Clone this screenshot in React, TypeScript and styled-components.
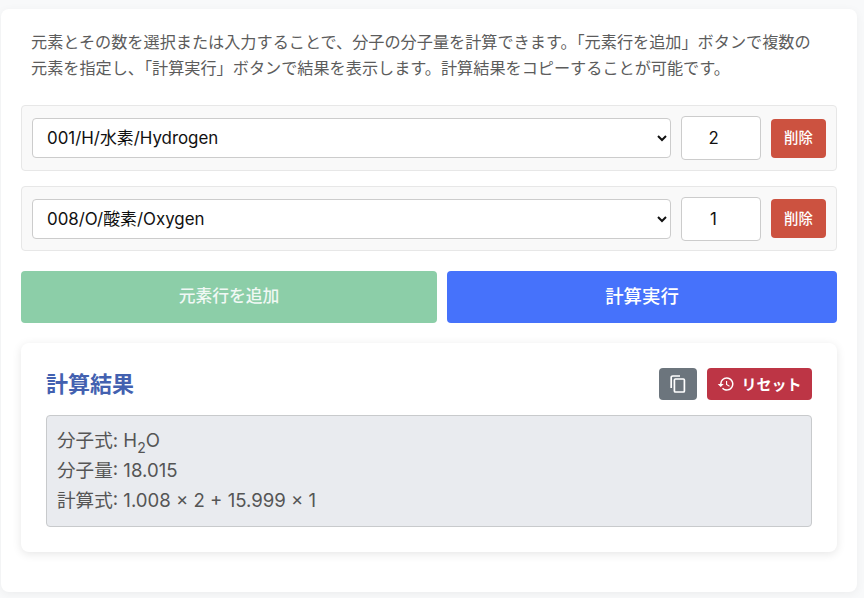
import React from "react";
import styled, { createGlobalStyle } from "styled-components";

const Global = createGlobalStyle`
  html, body { margin: 0; padding: 0; background: #f8f9fa; }
  body { font-family: Inter, "Noto Sans CJK JP", sans-serif; overflow: hidden; }
  * { box-sizing: border-box; }
`;

const Page = styled.div`
  width: 864px;
  height: 598px;
  padding: 9px 7px 6px 1px;
`;

const Card = styled.main`
  height: 583px;
  background: #fff;
  border-radius: 8px;
  box-shadow: 0 2px 10px rgba(0, 0, 0, 0.05);
  padding: 20px;
`;

const Intro = styled.p`
  margin: 0 0 20px;
  padding: 0 20px 0 10px;
  font-size: 16.15px;
  line-height: 26px;
  color: #5c5c5c;
  height: 56px;
`;

const Row = styled.div<{ $h: number }>`
  height: ${(p) => p.$h}px;
  display: flex;
  align-items: center;
  gap: 10px;
  padding: 0 10px;
  margin-bottom: 15px;
  background: #f9f9f9;
  border: 1px solid #e7e7e7;
  border-radius: 4px;
`;

const ElementSelect = styled.select`
  flex: 1;
  min-width: 0;
  height: 40px;
  padding: 0 10px;
  font: 16.9px Inter, "Noto Sans CJK JP", sans-serif;
  color: #111;
  background: #fff;
  border: 1px solid #ccc;
  border-radius: 4px;
`;

const CountInput = styled.input`
  width: 80px;
  height: 44px;
  text-align: center;
  font: 16.8px Inter, sans-serif;
  color: #111;
  background: #fff;
  border: 1px solid #ccc;
  border-radius: 4px;
  padding: 0 8px;
`;

const DeleteButton = styled.button`
  width: 55px;
  height: 39px;
  border: 0;
  border-radius: 4px;
  background: #cc5240;
  color: #fff;
  font: 500 14.4px Inter, "Noto Sans CJK JP", sans-serif;
  padding: 0 0 3px;
`;

const Actions = styled.div`
  display: flex;
  gap: 10px;
  margin: 20px 0 20px;
`;

const ActionButton = styled.button<{ $w: number; $bg: string; $size: number; $fg: string }>`
  width: ${(p) => p.$w}px;
  height: 52px;
  border: 0;
  border-radius: 4px;
  background: ${(p) => p.$bg};
  color: ${(p) => p.$fg};
  font: 500 ${(p) => p.$size}px Inter, "Noto Sans CJK JP", sans-serif;
  padding: 0 0 4px;
`;

const Result = styled.section`
  height: 209px;
  background: #fff;
  border-radius: 8px;
  box-shadow: 0 2px 10px rgba(0, 0, 0, 0.1);
  padding: 25px;
`;

const ResultHead = styled.div`
  display: flex;
  align-items: center;
  justify-content: space-between;
  height: 32px;
  margin-bottom: 15px;
`;

const ResultTitle = styled.h2`
  margin: 0 0 4px;
  font-size: 22px;
  font-weight: 600;
  color: #4361b0;
`;

const Tools = styled.div`
  display: flex;
  gap: 10px;
`;

const CopyButton = styled.button`
  width: 38px;
  height: 32px;
  border: 0;
  border-radius: 4px;
  background: #6c757d;
  color: #fff;
  display: flex;
  align-items: center;
  justify-content: center;
  padding: 0;
`;

const ResetButton = styled.button`
  width: 105px;
  height: 32px;
  border: 0;
  border-radius: 4px;
  background: #bd3545;
  color: #fff;
  display: flex;
  align-items: center;
  justify-content: center;
  gap: 6px;
  padding: 0 0 1px;
  font: 600 15px Inter, "Noto Sans CJK JP", sans-serif;
`;

const Output = styled.div`
  height: 112px;
  padding: 9px 10px 10px;
  background: #e9ebef;
  border: 1px solid #c8cacc;
  border-radius: 4px;
  font-size: 18.6px;
  line-height: 30px;
  color: #555;
`;

const Line = styled.div`
  height: 30px;
  white-space: nowrap;
`;

const Sub = styled.sub`
  font-size: 14px;
  line-height: 0;
  vertical-align: -6px;
`;

const CopyIcon = () => (
  <svg width="16" height="18" viewBox="0 0 16 18" fill="none" stroke="currentColor" strokeWidth="1.7">
    <path d="M1.2 13V2.6C1.2 1.6 1.8 1 2.8 1H10" />
    <rect x="4.4" y="4" width="10" height="13" rx="1" />
  </svg>
);

const HistoryIcon = () => (
  <svg width="18" height="18" viewBox="0 0 24 24" fill="currentColor">
    <path d="M13 3a9 9 0 0 0-9 9H1l3.9 3.9.1.1L9 12H6a7 7 0 1 1 2.05 4.95l-1.42 1.42A9 9 0 1 0 13 3zm-1 5v5l4.28 2.54.72-1.21-3.5-2.08V8H12z" />
  </svg>
);

const rows = [
  { value: "001/H/水素/Hydrogen", count: 2, h: 66 },
  { value: "008/O/酸素/Oxygen", count: 1, h: 65 },
];

export default function App() {
  return (
    <Page>
      <Global />
      <Card>
        <Intro>
          元素とその数を選択または入力することで、分子の分子量を計算できます。「元素行を追加」ボタンで複数の元素を指定し、「計算実行」ボタンで結果を表示します。計算結果をコピーすることが可能です。
        </Intro>
        {rows.map((r) => (
          <Row key={r.value} $h={r.h}>
            <ElementSelect defaultValue={r.value}>
              <option>{r.value}</option>
            </ElementSelect>
            <CountInput type="number" min={1} defaultValue={r.count} />
            <DeleteButton>削除</DeleteButton>
          </Row>
        ))}
        <Actions>
          <ActionButton $w={416} $bg="#8ccea8" $fg="#f0f8f4" $size={16.8}>元素行を追加</ActionButton>
          <ActionButton $w={390} $bg="#4672fb" $fg="#fff" $size={18.4}>計算実行</ActionButton>
        </Actions>
        <Result>
          <ResultHead>
            <ResultTitle>計算結果</ResultTitle>
            <Tools>
              <CopyButton aria-label="コピー"><CopyIcon /></CopyButton>
              <ResetButton><HistoryIcon />リセット</ResetButton>
            </Tools>
          </ResultHead>
          <Output>
            <Line>分子式: H<Sub>2</Sub>O</Line>
            <Line>分子量: 18.015</Line>
            <Line>計算式: 1.008 × 2 + 15.999 × 1</Line>
          </Output>
        </Result>
      </Card>
    </Page>
  );
}
